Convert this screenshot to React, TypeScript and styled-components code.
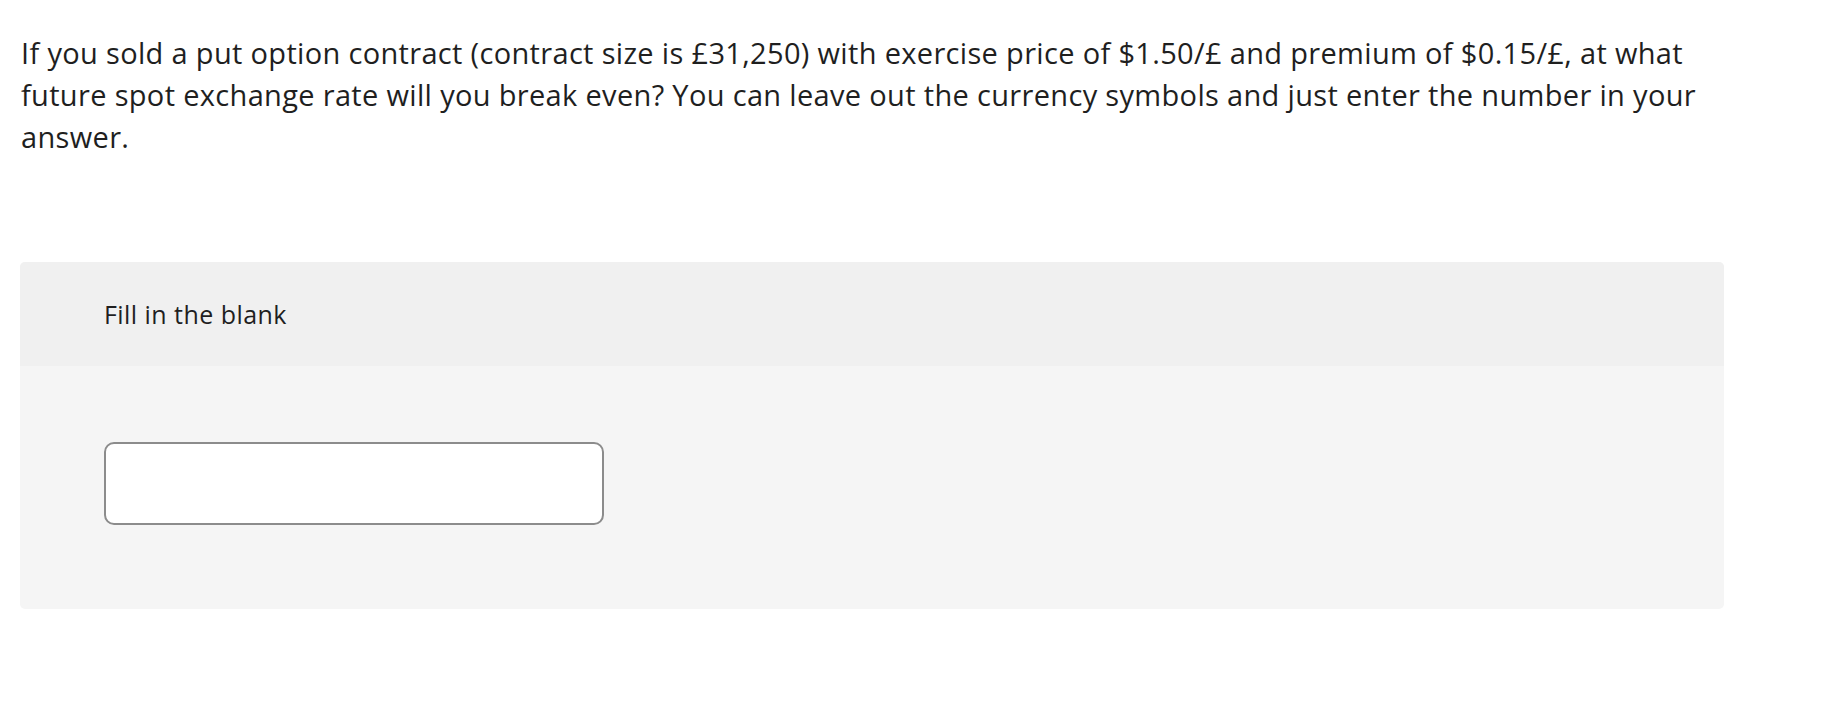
import styled, { createGlobalStyle } from 'styled-components';

const GlobalStyle = createGlobalStyle`
  body {
    margin: 0;
    background: #fff;
    font-family: 'Open Sans', Lato, sans-serif;
    color: #1f1f1f;
  }
`;

const Page = styled.div`
  padding: 32px 20px 0 20px;
  width: 1830px;
  box-sizing: border-box;
`;

const Question = styled.p`
  margin: 0 0 0 1px;
  width: 1706px;
  font-size: 29px;
  line-height: 42px;
  letter-spacing: 0.33px;
`;

const Panel = styled.section`
  margin-top: 104px;
  width: 1704px;
  border-radius: 5px;
  overflow: hidden;
  background: #f5f5f5;
`;

const PanelHeader = styled.div`
  height: 104px;
  padding: 0 84px;
  display: flex;
  align-items: center;
  background: #f0f0f0;
  font-size: 25px;
  letter-spacing: 0.45px;
`;

const PanelBody = styled.div`
  padding: 76px 84px 84px;
`;

const BlankInput = styled.input`
  display: block;
  box-sizing: border-box;
  width: 500px;
  height: 83px;
  border: 2px solid #8c8c8c;
  border-radius: 10px;
  background: #fff;
  font-size: 24px;
  padding: 0 16px;
  outline: none;
`;

export default function App() {
  return (
    <Page>
      <GlobalStyle />
      <Question>
        If you sold a put option contract (contract size is £31,250) with exercise price of $1.50/£ and
        premium of $0.15/£, at what future spot exchange rate will you break even? You can leave out the
        currency symbols and just enter the number in your answer.
      </Question>
      <Panel>
        <PanelHeader>Fill in the blank</PanelHeader>
        <PanelBody>
          <BlankInput type="text" aria-label="Answer" />
        </PanelBody>
      </Panel>
    </Page>
  );
}
